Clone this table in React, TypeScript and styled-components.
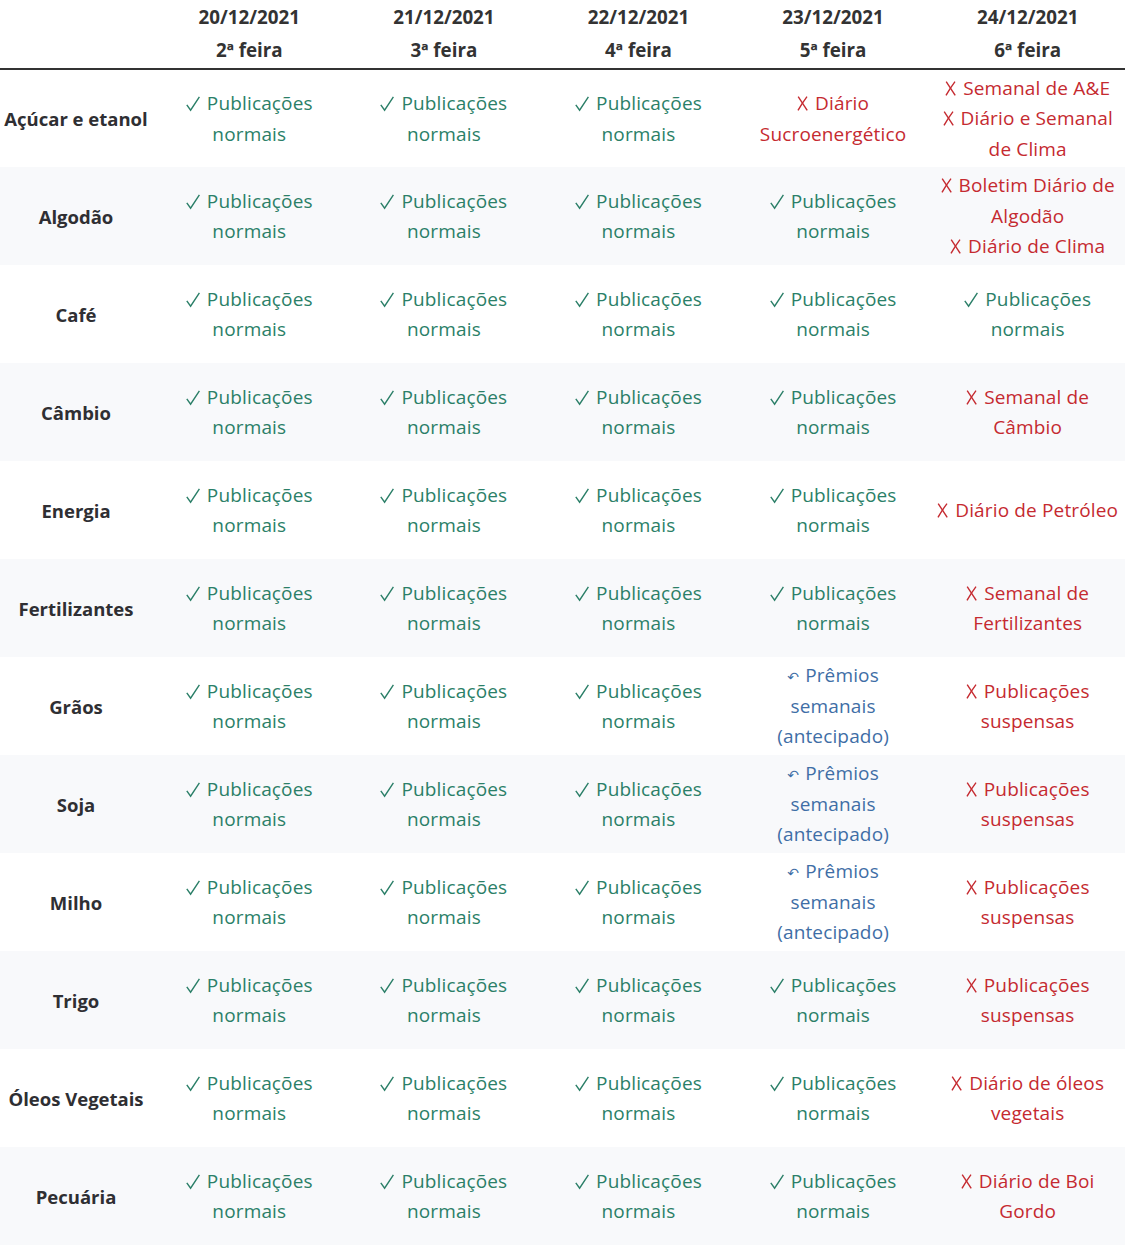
import styled, { createGlobalStyle } from "styled-components";

const GlobalStyle = createGlobalStyle`
  body {
    margin: 0;
    background: #ffffff;
    font-family: "Open Sans", Lato, sans-serif;
  }
`

const StyledTable = styled.table`
  width: 1125px;
  border-collapse: collapse;
  table-layout: fixed;
  color: #333333;
`
const HeadCell = styled.th`
  height: 68px;
  padding: 0;
  font-size: 18.8px;
  font-weight: 700;
  line-height: 33px;
  text-align: center;
  vertical-align: middle;
  border-bottom: 2px solid #333333;
`
const Row = styled.tr<{ $striped: boolean }>`
  height: 98px;
  background-color: ${(p) => (p.$striped ? "#f8f9fb" : "#ffffff")};
`
const LabelCell = styled.th`
  padding: 0;
  font-size: 18.5px;
  font-weight: 700;
  text-align: center;
  vertical-align: middle;
  color: #2f2f33;
  white-space: nowrap;
`
const StatusCell = styled.td`
  padding: 0;
  font-size: 19px;
  line-height: 30.5px;
  text-align: center;
  vertical-align: middle;
`
const Line = styled.div<{ $kind: Kind }>`
  white-space: nowrap;
  letter-spacing: 0.15px;
  color: ${(p) =>
    p.$kind === "ok" ? "#2b7f68" : p.$kind === "off" ? "#c52a30" : "#3f6ea6"};
`
const Mark = styled.svg<{ $w: number }>`
  display: inline-block;
  width: ${(p) => p.$w}px;
  height: 15px;
  margin-right: 7px;
  vertical-align: -1px;
  overflow: visible;
`
const Turn = styled.span`
  display: inline-block;
  line-height: 1;
  margin-right: 6px;
  font-family: "DejaVu Sans", sans-serif;
  font-size: 14px;
`

type Kind = "ok" | "off" | "early";
type Status = { kind: Kind; lines: string[][] };

const normal: Status = { kind: "ok", lines: [["✓", "Publicações"], ["", "normais"]] };
const suspended: Status = { kind: "off", lines: [["✗", "Publicações"], ["", "suspensas"]] };
const early: Status = {
  kind: "early",
  lines: [["↶", "Prêmios"], ["", "semanais"], ["", "(antecipado)"]],
};
const off = (...lines: string[][]): Status => ({ kind: "off", lines });

const days = [
  ["20/12/2021", "2ª feira"],
  ["21/12/2021", "3ª feira"],
  ["22/12/2021", "4ª feira"],
  ["23/12/2021", "5ª feira"],
  ["24/12/2021", "6ª feira"],
];

const rows: { name: string; cells: Status[] }[] = [
  {
    name: "Açúcar e etanol",
    cells: [
      normal, normal, normal,
      off(["✗", "Diário"], ["", "Sucroenergético"]),
      off(["✗", "Semanal de A&E"], ["✗", "Diário e Semanal"], ["", "de Clima"]),
    ],
  },
  {
    name: "Algodão",
    cells: [
      normal, normal, normal, normal,
      off(["✗", "Boletim Diário de"], ["", "Algodão"], ["✗", "Diário de Clima"]),
    ],
  },
  { name: "Café", cells: [normal, normal, normal, normal, normal] },
  {
    name: "Câmbio",
    cells: [normal, normal, normal, normal, off(["✗", "Semanal de"], ["", "Câmbio"])],
  },
  {
    name: "Energia",
    cells: [normal, normal, normal, normal, off(["✗", "Diário de Petróleo"])],
  },
  {
    name: "Fertilizantes",
    cells: [normal, normal, normal, normal, off(["✗", "Semanal de"], ["", "Fertilizantes"])],
  },
  { name: "Grãos", cells: [normal, normal, normal, early, suspended] },
  { name: "Soja", cells: [normal, normal, normal, early, suspended] },
  { name: "Milho", cells: [normal, normal, normal, early, suspended] },
  { name: "Trigo", cells: [normal, normal, normal, normal, suspended] },
  {
    name: "Óleos Vegetais",
    cells: [normal, normal, normal, normal, off(["✗", "Diário de óleos"], ["", "vegetais"])],
  },
  {
    name: "Pecuária",
    cells: [normal, normal, normal, normal, off(["✗", "Diário de Boi"], ["", "Gordo"])],
  },
];

function Check() {
  return (
    <Mark $w={14} viewBox="0 0 14 15" aria-hidden="true">
      <path d="M0.8 8.8 L4.6 14.2 L13.4 0.8" fill="none" stroke="currentColor" strokeWidth="1.4" />
    </Mark>
  );
}

function Cross() {
  return (
    <Mark $w={11} viewBox="0 0 11 15" aria-hidden="true">
      <path d="M1.2 0.6 L10.2 14.4" fill="none" stroke="currentColor" strokeWidth="1.4" />
      <path d="M10 0.6 Q5.5 6.5 1 14.4" fill="none" stroke="currentColor" strokeWidth="1.4" />
    </Mark>
  );
}

function Glyph({ mark }: { mark: string }) {
  if (mark === "✓") return <Check />;
  if (mark === "✗") return <Cross />;
  return <Turn>{mark}</Turn>;
}

function StatusContent({ status }: { status: Status }) {
  return (
    <>
      {status.lines.map(([mark, text], i) => (
        <Line key={i} $kind={status.kind}>
          {mark && <Glyph mark={mark} />}
          {text}
        </Line>
      ))}
    </>
  );
}

export default function App() {
  return (
    <>
      <GlobalStyle />
      <StyledTable>
        <colgroup>
          <col style={{ width: "152px" }} />
          {days.map((d) => (
            <col key={d[0]} />
          ))}
        </colgroup>
        <thead>
          <tr>
            <HeadCell />
            {days.map(([date, weekday]) => (
              <HeadCell key={date}>
                {date}
                <br />
                {weekday}
              </HeadCell>
            ))}
          </tr>
        </thead>
        <tbody>
          {rows.map((row, i) => (
            <Row key={row.name} $striped={i % 2 === 1}>
              <LabelCell>{row.name}</LabelCell>
              {row.cells.map((c, j) => (
                <StatusCell key={j}>
                  <StatusContent status={c} />
                </StatusCell>
              ))}
            </Row>
          ))}
        </tbody>
      </StyledTable>
    </>
  );
}
